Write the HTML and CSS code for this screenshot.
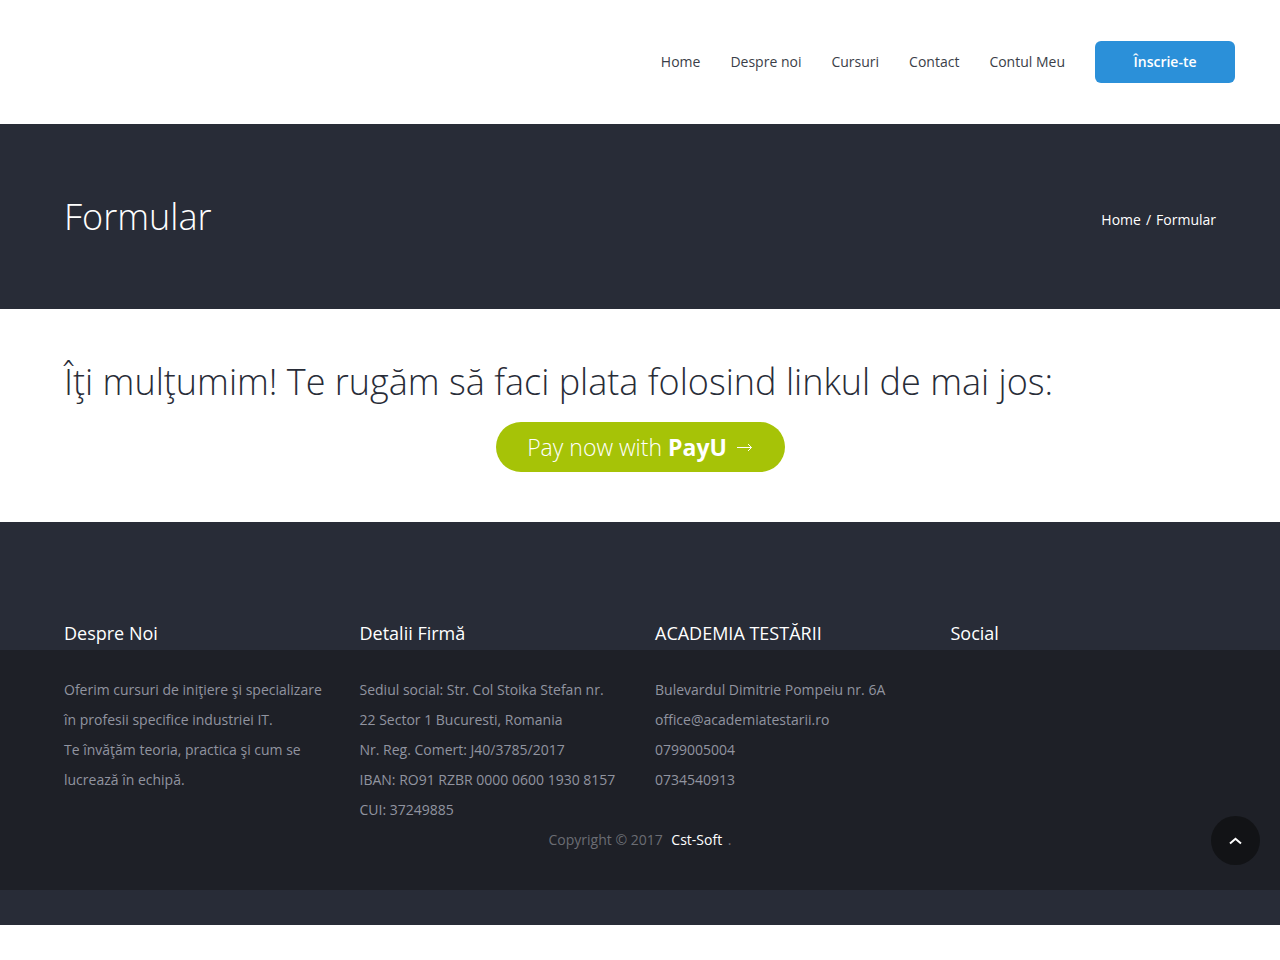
FILE: index.html
```html
<!DOCTYPE html>
<html lang="en">
<head>
<meta charset="utf-8">
<meta name="viewport" content="width=device-width, initial-scale=1">
<title>Formular</title>
<link rel="stylesheet" href="styles.css">
</head>
<body>
<header class="header">
  <nav class="nav">
    <a href="#">Home</a>
    <a href="#">Despre noi</a>
    <a href="#">Cursuri</a>
    <a href="#">Contact</a>
    <a href="#">Contul Meu</a>
    <a href="#" class="signup">Înscrie-te</a>
  </nav>
</header>
<section class="banner">
  <h1 class="title">Formular</h1>
  <div class="crumbs"><a href="#">Home</a><span>/</span><span>Formular</span></div>
</section>
<main class="main">
  <h2 class="thanks">Îţi mulţumim! Te rugăm să faci plata folosind linkul de mai jos:</h2>
  <a href="#" class="pay"><span>Pay now with <b>PayU</b></span>
    <svg class="arrow" viewBox="0 0 16 10" aria-hidden="true"><path d="M0 5.5h14.5M11 2l3.5 3.5-3.5 3.5"/></svg>
  </a>
</main>
<footer class="footer">
  <div class="columns heads">
    <h3>Despre Noi</h3>
    <h3>Detalii Firmă</h3>
    <h3>ACADEMIA TESTĂRII</h3>
    <h3>Social</h3>
  </div>
  <div class="details">
    <div class="columns">
      <p>Oferim cursuri de iniţiere şi specializare în profesii specifice industriei IT.<br>Te învăţăm teoria, practica şi cum se lucrează în echipă.</p>
      <p>Sediul social: Str. Col Stoika Stefan nr.<br>22 Sector 1 Bucuresti, Romania<br>Nr. Reg. Comert: J40/3785/2017<br>IBAN: RO91 RZBR 0000 0600 1930 8157<br>CUI: 37249885</p>
      <p>Bulevardul Dimitrie Pompeiu nr. 6A<br>office@academiatestarii.ro<br>0799005004<br>0734540913</p>
      <div></div>
    </div>
    <p class="copyright">Copyright © 2017 <a href="#">Cst-Soft</a> .</p>
  </div>
</footer>
<button class="top" type="button" aria-label="Sus">
  <svg viewBox="0 0 13 8" aria-hidden="true"><path d="M1 6.5L6.5 1.8l5.5 4.7"/></svg>
</button>
</body>
</html>
```
FILE: styles.css
```css
* { box-sizing: border-box; }
body { margin: 0; background: #fff; color: #282c37; font: 14px/30px "Open Sans", sans-serif; }
a { color: inherit; text-decoration: none; }
h1, h2, h3, p { margin: 0; }
.header { height: 124px; padding: 0 45px; display: flex; align-items: center; justify-content: flex-end; color: #3a3e48; }
.nav { display: flex; align-items: center; gap: 30px; }
.signup { width: 140px; padding: 6px 0; border-radius: 6px; background: #2b90d9; color: #fff; font-weight: 600; text-align: center; }
.banner { padding: 68px 5%; background: #282c37; color: #fff; display: flex; align-items: center; justify-content: space-between; }
.title, .thanks { font-size: 36px; line-height: 49px; font-weight: 300; }
.crumbs { display: flex; gap: 5px; font-weight: 500; padding-top: 7px; }
.main { padding: 48px 5% 50px; display: flex; flex-direction: column; }
.pay { align-self: center; display: flex; align-items: center; justify-content: center; gap: 10px; width: 289px; height: 50px; margin-top: 16px; border-radius: 25px; background: #a6c307; color: #fff; font-size: 23px; font-weight: 300; }
.pay b { font-weight: 700; }
.arrow { width: 16px; height: 10px; fill: none; stroke: #fff; stroke-width: 1; }
.footer { background: #282c37; padding: 95px 0 35px; }
.columns { display: grid; grid-template-columns: repeat(4, 1fr); gap: 30px; padding: 0 5%; }
.heads { color: #fff; padding-bottom: 1px; }
.heads h3 { font-size: 18px; line-height: 32px; font-weight: 500; }
.details { background: #1e2027; padding: 25px 0 35px; color: #9194a0; }
.copyright { text-align: center; color: #6b6d74; }
.copyright a { color: #fff; font-weight: 500; margin: 0 2px 0 5px; }
.top { position: fixed; right: 20px; bottom: 95px; width: 49px; height: 49px; padding: 0; border: 0; border-radius: 50%; background: #121316; }
.top svg { width: 13px; height: 8px; fill: none; stroke: #fff; stroke-width: 2; }
```
